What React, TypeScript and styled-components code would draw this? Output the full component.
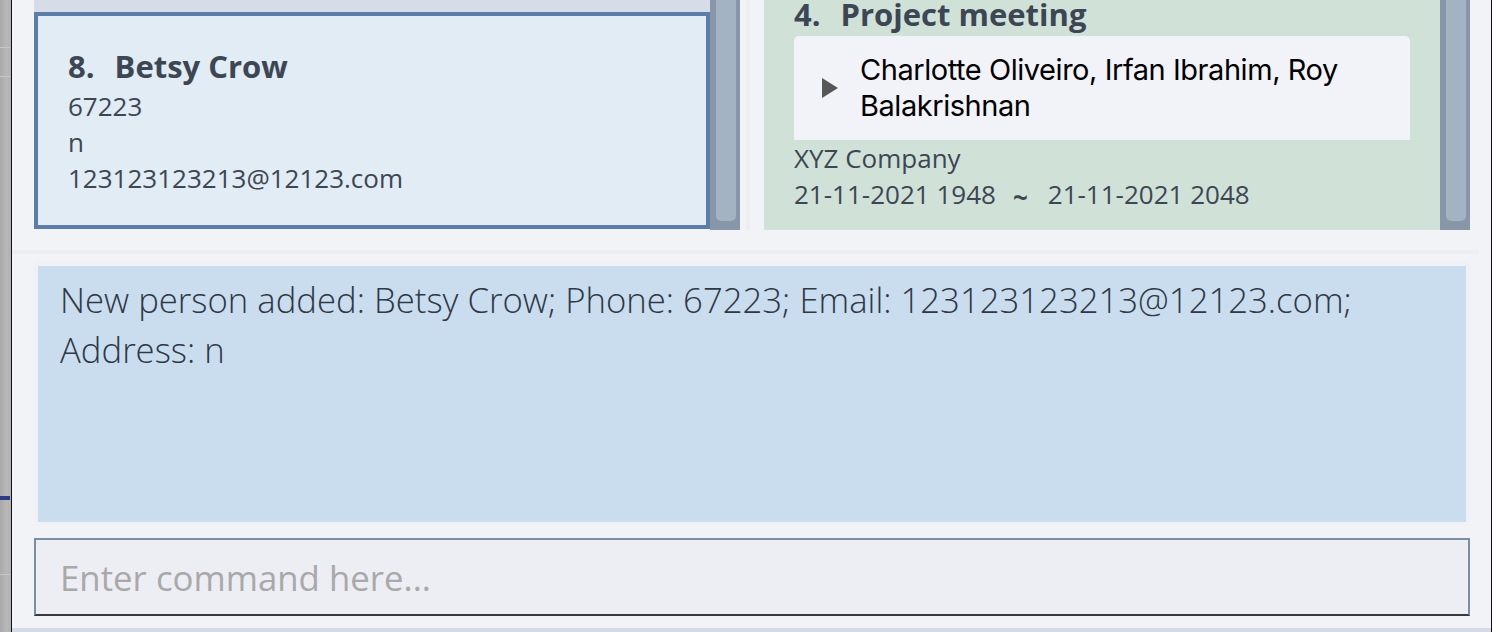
import React from 'react';
import styled, { createGlobalStyle } from 'styled-components';

const Global = createGlobalStyle`
  html, body { margin: 0; padding: 0; background: #ffffff; }
  body { font-family: "Open Sans", "DejaVu Sans", sans-serif; }
  * { box-sizing: border-box; }
`;

const Screen = styled.div`
  display: flex;
  width: 1494px;
  height: 632px;
  overflow: hidden;
  background: #ffffff;
`;

const DesktopStrip = styled.div`
  width: 12px;
  flex: none;
  display: flex;
  flex-direction: column;
  background: linear-gradient(90deg, #a9a9a9 0%, #b8b8b8 60%, #b1b1b1 100%);
  border-right: 1px solid #111;
`;

const StripMark = styled.div<{ $top: number; $h: number; $color: string }>`
  margin-top: ${(p) => p.$top}px;
  height: ${(p) => p.$h}px;
  width: 10px;
  background: ${(p) => p.$color};
`;

const Window = styled.div`
  width: 1479px;
  flex: none;
  display: flex;
  flex-direction: column;
  background: #f2f3f7;
`;

const WindowEdge = styled.div`
  width: 1px;
  flex: none;
  background: #111;
`;

const TopRow = styled.div`
  height: 230px;
  flex: none;
  display: grid;
  grid-template-columns: 706px 24px 706px;
  padding-left: 22px;
`;

const SplitGap = styled.div`
  display: flex;
  justify-content: center;
  padding-right: 8px;
`;

const SplitLine = styled.div`
  width: 4px;
  background: #eceef2;
`;

const ListPanel = styled.div`
  display: flex;
  height: 230px;
`;

const Viewport = styled.div<{ $bg: string }>`
  flex: 1;
  overflow: hidden;
  background: ${(p) => p.$bg};
`;

const ListContent = styled.div<{ $scroll: number }>`
  display: flex;
  flex-direction: column;
  margin-top: ${(p) => -p.$scroll}px;
`;

const PeekCell = styled.div`
  height: 12px;
  background: #d7dde8;
`;

const Scrollbar = styled.div`
  width: 30px;
  flex: none;
  background: #8797a9;
  padding: 0 4px 0 6px;
`;

const Thumb = styled.div`
  height: 221px;
  background: #a3b3c2;
  border-radius: 0 0 5px 5px;
`;

const Card = styled.div<{ $selected?: boolean; $bg: string }>`
  background: ${(p) => p.$bg};
  border: ${(p) => (p.$selected ? '4px solid #5b7ea8' : 'none')};
  padding: 30px 30px 29px 30px;
  color: #3d4653;
  display: flex;
  flex-direction: column;
`;

const TitleRow = styled.div`
  display: flex;
  gap: 20px;
  font-weight: 700;
  font-size: 31px;
  line-height: 40px;
  color: #3d4653;
  margin-bottom: 2px;
`;

const Detail = styled.div`
  font-size: 26px;
  line-height: 36px;
  color: #3d4653;
  white-space: nowrap;
`;

const DateRow = styled.div`
  display: flex;
  align-items: baseline;
  font-size: 26px;
  line-height: 36px;
  color: #3d4653;
  white-space: nowrap;
`;

const Tilde = styled.span`
  font-weight: 700;
  font-size: 26px;
  margin: 0 20px 0 17px;
  position: relative;
  top: 3px;
`;

const Participants = styled.div`
  background: #f2f3f8;
  border-radius: 5px 5px 0 0;
  height: 104px;
  display: flex;
  align-items: center;
  padding: 0 60px 0 28px;
`;

const Arrow = styled.svg`
  width: 16px;
  height: 20px;
  flex: none;
  margin-right: 22px;
`;

const ParticipantText = styled.div`
  font-family: Inter, "Noto Sans", sans-serif;
  font-size: 29px;
  line-height: 36px;
  color: #000;
  letter-spacing: -0.45px;
`;

const BandRow = styled.div`
  height: 32px;
  flex: none;
  display: flex;
  flex-direction: column;
  padding-top: 20px;
`;

const HBand = styled.div`
  height: 4px;
  background: #eceef2;
  margin-right: 12px;
`;

const ResultWrap = styled.div`
  height: 264px;
  flex: none;
  margin: 0 21px 0 22px;
  padding: 4px;
  background: #eff1f6;
`;

const ResultBox = styled.div`
  height: 100%;
  background: #c9ddef;
  padding: 9px 22px 0 22px;
  font-weight: 300;
  font-size: 34.7px;
  line-height: 50px;
  color: #2f3845;
`;

const CommandArea = styled.div`
  flex: none;
  padding: 12px 21px 12px 22px;
`;

const CommandInput = styled.div`
  height: 78px;
  background: #eceef4;
  border: 2px solid #7a8ea1;
  border-bottom-color: #3a3a3a;
  display: flex;
  align-items: center;
  padding-left: 24px;
  font-size: 34.8px;
  color: #a9a9a9;
`;

const BottomBar = styled.div`
  height: 4px;
  flex: none;
  background: #d5dbe6;
`;

export default function App() {
  return (
    <>
      <Global />
      <Screen>
        <DesktopStrip>
          <StripMark $top={47} $h={1} $color="#c8c8c8" />
          <StripMark $top={28} $h={1} $color="#c8c8c8" />
          <StripMark $top={419} $h={4} $color="#2c3b84" />
          <StripMark $top={74} $h={1} $color="#c6c6c6" />
        </DesktopStrip>
        <Window>
          <TopRow>
            <ListPanel>
              <Viewport $bg="#f2f3f7">
                <ListContent $scroll={0}>
                  <PeekCell />
                  <Card $selected $bg="#e2ecf5">
                    <TitleRow>
                      <span>8.</span>
                      <span>Betsy Crow</span>
                    </TitleRow>
                    <Detail>67223</Detail>
                    <Detail>n</Detail>
                    <Detail>123123123213@12123.com</Detail>
                  </Card>
                </ListContent>
              </Viewport>
              <Scrollbar>
                <Thumb />
              </Scrollbar>
            </ListPanel>
            <SplitGap>
              <SplitLine />
            </SplitGap>
            <ListPanel>
              <Viewport $bg="#d0e2d8">
                <ListContent $scroll={36}>
                  <Card $bg="#d0e2d8">
                    <TitleRow>
                      <span>4.</span>
                      <span>Project meeting</span>
                    </TitleRow>
                    <Participants>
                      <Arrow viewBox="0 0 16 20">
                        <polygon points="0,0 16,10 0,20" fill="#575757" />
                      </Arrow>
                      <ParticipantText>Charlotte Oliveiro, Irfan Ibrahim, Roy Balakrishnan</ParticipantText>
                    </Participants>
                    <Detail>XYZ Company</Detail>
                    <DateRow>
                      <span>21-11-2021 1948</span>
                      <Tilde>~</Tilde>
                      <span>21-11-2021 2048</span>
                    </DateRow>
                  </Card>
                </ListContent>
              </Viewport>
              <Scrollbar>
                <Thumb />
              </Scrollbar>
            </ListPanel>
          </TopRow>
          <BandRow>
            <HBand />
          </BandRow>
          <ResultWrap>
            <ResultBox>
              New person added: Betsy Crow; Phone: 67223; Email: 123123123213@12123.com; Address: n
            </ResultBox>
          </ResultWrap>
          <CommandArea>
            <CommandInput>Enter command here...</CommandInput>
          </CommandArea>
          <BottomBar />
        </Window>
        <WindowEdge />
      </Screen>
    </>
  );
}
